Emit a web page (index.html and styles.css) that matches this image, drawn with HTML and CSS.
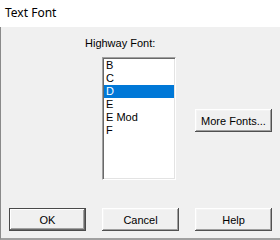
FILE: index.html
```html
<!DOCTYPE html>
<html>
<head>
<meta charset="utf-8">
<link rel="stylesheet" href="styles.css">
</head>
<body>
<div class="dialog">
  <div class="titlebar">Text Font</div>
  <div class="panel">
    <div class="main">
      <div class="fontgroup">
        <div class="label">Highway Font:</div>
        <div class="listbox">
          <div class="item">B</div>
          <div class="item">C</div>
          <div class="item selected">D</div>
          <div class="item">E</div>
          <div class="item">E Mod</div>
          <div class="item">F</div>
        </div>
      </div>
      <button class="btn more">More Fonts...</button>
    </div>
    <div class="buttons">
      <button class="btn default">OK</button>
      <button class="btn">Cancel</button>
      <button class="btn">Help</button>
    </div>
  </div>
</div>
</body>
</html>
```
FILE: styles.css
```css
* { box-sizing: border-box; }
html, body { margin: 0; padding: 0; }
body {
  width: 280px;
  height: 240px;
  overflow: hidden;
  background: #f0f0f0;
  font-family: "Liberation Sans", Arial, sans-serif;
  font-size: 11px;
  color: #000;
}
.dialog {
  width: 280px;
  height: 240px;
  display: flex;
  flex-direction: column;
}
.titlebar {
  height: 27px;
  background: #fff;
  padding-left: 5px;
  padding-top: 5px;
  font-family: "Noto Sans", "Open Sans", sans-serif;
  font-size: 12px;
  line-height: 16px;
}
.panel {
  flex: 1;
  background: #f0f0f0;
  border-left: 1px solid #8a8a8a;
  border-bottom: 2px solid #a0a0a0;
  display: flex;
  flex-direction: column;
}
.main {
  display: flex;
  align-items: flex-start;
  padding-left: 84px;
  padding-top: 10px;
  height: 171px;
}
.fontgroup {
  display: flex;
  flex-direction: column;
}
.label {
  line-height: 13px;
  height: 13px;
}
.listbox {
  margin-top: 7px;
  margin-left: 17px;
  width: 74px;
  height: 123px;
  background: #fff;
  border-top: 1px solid #a0a0a0;
  border-left: 1px solid #a0a0a0;
  border-right: 1px solid #fff;
  border-bottom: 1px solid #fff;
  box-shadow: inset 1px 1px 0 #696969, inset -1px -1px 0 #e3e3e3;
  padding: 1px 1px 1px 1px;
}
.item {
  height: 13px;
  line-height: 13px;
  padding-left: 2px;
  white-space: nowrap;
}
.item.selected {
  background: #0078d7;
  color: #fff;
}
.btn {
  font-family: "Liberation Sans", Arial, sans-serif;
  font-size: 11px;
  color: #000;
  background: #f0f0f0;
  border: none;
  padding: 0;
  height: 23px;
  width: 77px;
  box-shadow: inset -1px -1px 0 #505050, inset 1px 1px 0 #fff, inset -2px -2px 0 #a0a0a0, inset 2px 2px 0 #f4f4f4;
}
.more {
  margin-left: 19px;
  margin-top: 72px;
}
.btn.default {
  border: 1px solid #4a4a4a;
  box-shadow: inset -1px -1px 0 #696969, inset 1px 1px 0 #fff, inset -2px -2px 0 #a0a0a0;
}
.buttons {
  display: flex;
  gap: 16px;
  padding-left: 8px;
  padding-top: 10px;
}
```
